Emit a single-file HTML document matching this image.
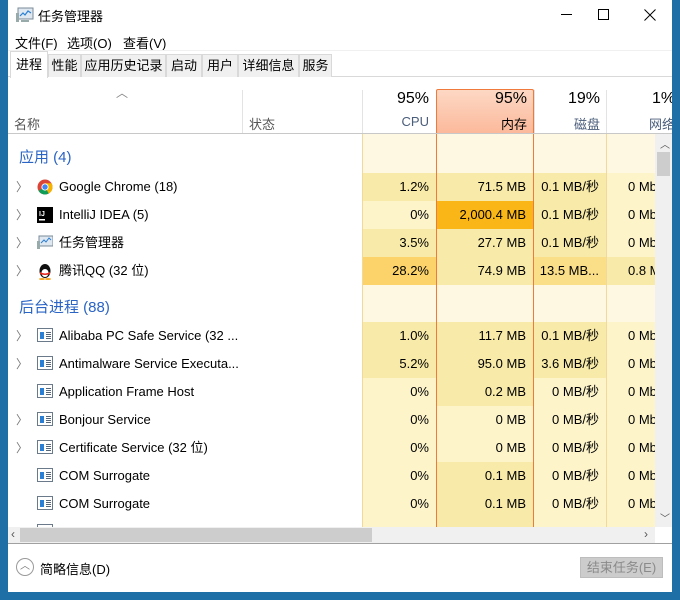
<!DOCTYPE html>
<html><head><meta charset="utf-8"><style>
*{margin:0;padding:0;box-sizing:border-box}
body{width:680px;height:600px;background:#1d6fa5;position:relative;overflow:hidden;font-family:"Liberation Sans","Noto Sans CJK SC",sans-serif;font-size:13px;color:#000}
#win{position:absolute;left:8px;top:0;width:664px;height:592px;background:#fff;overflow:hidden}
.a{position:absolute;white-space:nowrap}
.tab{position:absolute;top:54px;height:23px;background:#f0f0f0;border:1px solid #d9d9d9;border-bottom:none;font-size:13px;line-height:22px;text-align:center}
.c{position:absolute;height:28px;line-height:28px;text-align:right;padding-right:7px}
.L{background:#fdf4ca}.M{background:#f8eaa8}.D{background:#fbd36a}.O{background:#f9b616}.G{background:#fef7e1}.Q{background:#fbdf88}
.nm{position:absolute;left:51px;height:28px;line-height:28px}
.chev{position:absolute;left:8px;color:#777;font-size:12px;line-height:28px;height:28px}
.ic{position:absolute;left:29px;width:16px;height:14px}
.svc{border:1px solid #6b7a8a;background:#fff}
.svc:before{content:"";position:absolute;left:2px;top:3px;width:4px;height:7px;background:#2a7fd4}
.svc:after{content:"";position:absolute;left:8px;top:3px;width:5px;height:7px;background:repeating-linear-gradient(#56677a 0 1px,#fff 1px 2px)}
</style></head><body>
<div id="win">
<svg class="a" style="left:8px;top:7px" width="18" height="16"><rect x="2" y="1" width="15" height="11" fill="#dfe8f0" stroke="#7a8a99"/><polyline points="4,9 7,6 9,8 12,4 15,6" fill="none" stroke="#2a7fd4" stroke-width="1.2"/><rect x="0" y="6" width="3" height="9" fill="#9aa"/><rect x="5" y="13" width="8" height="2" fill="#9aa"/></svg>
<div class="a" style="left:30px;top:6px;font-size:13px">任务管理器</div>
<div class="a" style="left:553px;top:14px;width:11px;height:1px;background:#000"></div>
<div class="a" style="left:590px;top:9px;width:11px;height:11px;border:1px solid #000"></div>
<svg class="a" style="left:636px;top:9px" width="12" height="12"><path d="M0.5 0.5 L11.5 11.5 M11.5 0.5 L0.5 11.5" stroke="#000" stroke-width="1"/></svg>
<div class="a" style="left:7px;top:33px">文件(F)</div>
<div class="a" style="left:59px;top:33px">选项(O)</div>
<div class="a" style="left:115px;top:33px">查看(V)</div>
<div class="a" style="left:0;top:50px;width:664px;height:27px;border-bottom:1px solid #d9d9d9;border-top:1px solid #f0f0f0"></div>
<div class="tab" style="left:2px;top:51px;width:38px;height:27px;background:#fff;line-height:26px">进程</div>
<div class="tab" style="left:40px;width:33px">性能</div>
<div class="tab" style="left:73px;width:85px">应用历史记录</div>
<div class="tab" style="left:158px;width:36px">启动</div>
<div class="tab" style="left:194px;width:36px">用户</div>
<div class="tab" style="left:230px;width:61px">详细信息</div>
<div class="tab" style="left:291px;width:33px">服务</div>
<div class="a" style="left:108px;top:84px;color:#888;font-size:12px">︿</div>
<div class="a" style="left:6px;top:114px;color:#555">名称</div>
<div class="a" style="left:234px;top:90px;width:1px;height:43px;background:#e3e3e3"></div>
<div class="a" style="left:241px;top:114px;color:#555">状态</div>
<div class="a" style="left:354px;top:90px;width:1px;height:43px;background:#e3e3e3"></div>
<div class="a" style="left:355px;top:90px;width:66px;text-align:right;font-size:16px">95%</div>
<div class="a" style="left:355px;top:114px;width:66px;text-align:right;color:#4a5d7a">CPU</div>
<div class="a" style="left:428px;top:89px;width:98px;height:44px;border:1px solid #f07a3c;border-bottom:none;border-radius:2px 2px 0 0;background:linear-gradient(#fdd8c4,#fcb99b)"></div>
<div class="a" style="left:428px;top:90px;width:91px;text-align:right;font-size:16px">95%</div>
<div class="a" style="left:428px;top:114px;width:91px;text-align:right">内存</div>
<div class="a" style="left:526px;top:90px;width:1px;height:43px;background:#e3e3e3"></div>
<div class="a" style="left:526px;top:90px;width:66px;text-align:right;font-size:16px">19%</div>
<div class="a" style="left:526px;top:114px;width:66px;text-align:right;color:#4a5d7a">磁盘</div>
<div class="a" style="left:598px;top:90px;width:1px;height:43px;background:#e3e3e3"></div>
<div class="a" style="left:644px;top:90px;font-size:16px">1%</div>
<div class="a" style="left:641px;top:114px;color:#4a5d7a">网络</div>
<div class="a" style="left:0;top:133px;width:664px;height:1px;background:#c8c8c8"></div>
<div class="a" style="left:0;top:134px;width:647px;height:393px;overflow:hidden">
<div class="a G" style="left:354px;top:0;width:293px;height:39px"></div>
<div class="a G" style="left:354px;top:150px;width:293px;height:38px"></div>
<div class="a" style="left:11px;top:12px;font-size:15px;color:#2a64c5">应用 (4)</div>
<div class="a" style="left:11px;top:162px;font-size:15px;color:#2a64c5">后台进程 (88)</div>
<div id="rows"></div>
<div class="a" style="left:354px;top:0;width:1px;height:393px;background:#f0d99a"></div>
<div class="a" style="left:428px;top:0;width:1px;height:393px;background:#f07a3c"></div>
<div class="a" style="left:525px;top:0;width:1px;height:393px;background:#f07a3c"></div>
<div class="a" style="left:598px;top:0;width:1px;height:393px;background:#f0d99a"></div>
</div>
<div class="a" style="left:647px;top:134px;width:17px;height:393px;background:#f0f0f0"></div>
<div class="a" style="left:652px;top:136px;font-size:10px;color:#555">︿</div>
<div class="a" style="left:649px;top:152px;width:13px;height:24px;background:#cdcdcd"></div>
<div class="a" style="left:652px;top:510px;font-size:10px;color:#555">﹀</div>
<div class="a" style="left:0;top:527px;width:647px;height:16px;background:#f0f0f0"></div>
<div class="a" style="left:12px;top:528px;width:352px;height:14px;background:#cdcdcd"></div>
<div class="a" style="left:3px;top:527px;font-size:12px;color:#555">‹</div>
<div class="a" style="left:636px;top:527px;font-size:12px;color:#555">›</div>
<div class="a" style="left:0;top:543px;width:664px;height:1px;background:#a0a0a0"></div>
<div class="a" style="left:8px;top:558px;width:18px;height:18px;border:1px solid #9a9a9a;border-radius:50%;text-align:center;font-size:10px;line-height:16px;color:#777">︿</div>
<div class="a" style="left:32px;top:559px">简略信息(D)</div>
<div class="a" style="left:572px;top:557px;width:83px;height:21px;background:#cccccc;border:1px solid #bdbdbd;color:#8a8a8a;text-align:center;line-height:19px">结束任务(E)</div>
</div>
<script>
var R=[
[39,'>','chrome','Google Chrome (18)','1.2%','M','71.5 MB','M','0.1 MB/秒','M','0 Mb','L'],
[67,'>','ij','IntelliJ IDEA (5)','0%','L','2,000.4 MB','O','0.1 MB/秒','M','0 Mb','L'],
[95,'>','tm','任务管理器','3.5%','M','27.7 MB','M','0.1 MB/秒','M','0 Mb','L'],
[123,'>','qq','腾讯QQ (32 位)','28.2%','D','74.9 MB','M','13.5 MB...','Q','0.8 Mb','M'],
[188,'>','s','Alibaba PC Safe Service (32 ...','1.0%','M','11.7 MB','M','0.1 MB/秒','M','0 Mb','L'],
[216,'>','s','Antimalware Service Executa...','5.2%','M','95.0 MB','M','3.6 MB/秒','M','0 Mb','L'],
[244,'','s','Application Frame Host','0%','L','0.2 MB','M','0 MB/秒','L','0 Mb','L'],
[272,'>','s','Bonjour Service','0%','L','0 MB','L','0 MB/秒','L','0 Mb','L'],
[300,'>','s','Certificate Service (32 位)','0%','L','0 MB','L','0 MB/秒','L','0 Mb','L'],
[328,'','s','COM Surrogate','0%','L','0.1 MB','M','0 MB/秒','L','0 Mb','L'],
[356,'','s','COM Surrogate','0%','L','0.1 MB','M','0 MB/秒','L','0 Mb','L'],
[384,'','s','','','L','','M','','L','','L']];
var I={
chrome:'<svg class="ic" style="width:16px;height:16px" viewBox="0 0 16 16"><circle cx="8" cy="8" r="7.5" fill="#db4437"/><path d="M8 8 L1.5 11.7 A7.5 7.5 0 0 0 11.8 14.5Z" fill="#0f9d58"/><path d="M8 8 L11.8 14.5 A7.5 7.5 0 0 0 14.5 4.3 L8 4.3Z" fill="#f4b400"/><circle cx="8" cy="8" r="3.6" fill="#fff"/><circle cx="8" cy="8" r="2.7" fill="#4285f4"/></svg>',
ij:'<svg class="ic" style="width:16px;height:16px"><rect width="16" height="16" fill="#000"/><text x="2" y="9" fill="#fff" font-size="7" font-family="Liberation Sans" font-weight="bold">IJ</text><rect x="2" y="12" width="6" height="1.5" fill="#fff"/></svg>',
tm:'<svg class="ic" width="18" height="16"><rect x="2" y="1" width="14" height="10" fill="#dfe8f0" stroke="#7a8a99"/><polyline points="4,8 7,5 9,7 12,3 14,5" fill="none" stroke="#2a7fd4"/><rect x="0" y="6" width="3" height="9" fill="#9aa"/></svg>',
qq:'<svg class="ic" style="width:16px;height:17px" viewBox="0 0 16 17"><ellipse cx="8" cy="8" rx="5.5" ry="7" fill="#111"/><ellipse cx="8" cy="10" rx="3.5" ry="4" fill="#fff"/><path d="M3 9 Q8 12 13 9 L13 11 Q8 13 3 11Z" fill="#e3261c"/><ellipse cx="5" cy="16" rx="3" ry="1" fill="#f5a623"/><ellipse cx="11" cy="16" rx="3" ry="1" fill="#f5a623"/></svg>',
s:'<div class="ic svc"></div>'};
var h='';
R.forEach(function(r){var y=r[0];
h+='<div class="chev" style="top:'+y+'px">'+(r[1]?'〉':'')+'</div>';
h+='<div style="position:absolute;left:0;top:'+(y+6)+'px;height:16px;width:50px"><div style="position:relative;top:0">'+I[r[2]]+'</div></div>';
h+='<div class="nm" style="top:'+y+'px">'+r[3]+'</div>';
h+='<div class="c '+r[5]+'" style="left:355px;width:73px;top:'+y+'px">'+r[4]+'</div>';
h+='<div class="c '+r[7]+'" style="left:429px;width:96px;top:'+y+'px">'+r[6]+'</div>';
h+='<div class="c '+r[9]+'" style="left:526px;width:72px;top:'+y+'px">'+r[8]+'</div>';
h+='<div class="c '+r[11]+'" style="left:599px;width:48px;top:'+y+'px;text-align:left;padding-left:21px">'+r[10]+'</div>';
});
document.getElementById('rows').innerHTML=h;
</script>
</body></html>
